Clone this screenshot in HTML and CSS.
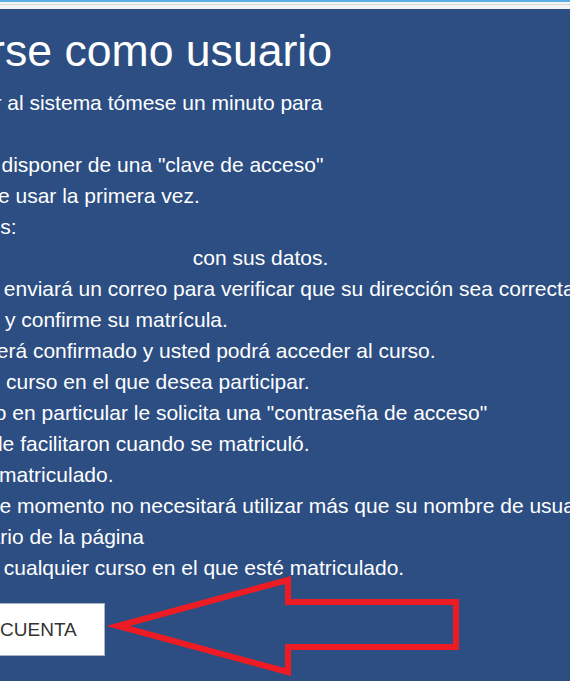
FILE: index.html
```html
<!DOCTYPE html>
<html lang="es">
<head>
<meta charset="utf-8">
<title>Registrarse como usuario</title>
<link rel="stylesheet" href="styles.css">
</head>
<body>
<div class="topbar"><div class="topbar-line"></div></div>
<main class="page">
  <div class="content">
    <h2 class="title">Registrarse como usuario</h2>
    <div class="lines">
      <div class="line">Hola, para acceder al sistema tómese un minuto para</div>
      <div class="line">crear una cuenta.</div>
      <div class="line">Cada curso puede disponer de una "clave de acceso"</div>
      <div class="line">que sólo tendrá que usar la primera vez.</div>
      <div class="line">Estos son los pasos:</div>
      <div class="line">1. Complete el <a class="link" href="#">Formulario de Matrícula</a> con sus datos.</div>
      <div class="line">2. La plataforma le enviará un correo para verificar que su dirección sea correcta.</div>
      <div class="line">3. Revise el correo y confirme su matrícula.</div>
      <div class="line">4. Así su registro será confirmado y usted podrá acceder al curso.</div>
      <div class="line">5. Elija entonces el curso en el que desea participar.</div>
      <div class="line">6.- Y, si algún curso en particular le solicita una "contraseña de acceso"</div>
      <div class="line">utilice aquella que le facilitaron cuando se matriculó.</div>
      <div class="line">7. Así, ya quedará matriculado.</div>
      <div class="line">8. Ya a partir de ese momento no necesitará utilizar más que su nombre de usuario y</div>
      <div class="line">clave en el formulario de la página</div>
      <div class="line">para así acceder a cualquier curso en el que esté matriculado.</div>
    </div>
    <div class="actions">
      <button class="btn" type="button">Crear nueva cuenta</button>
    </div>
  </div>
  <svg class="arrow" width="570" height="684" viewBox="0 0 570 684" aria-hidden="true">
    <polygon points="118,626 288,580 288,602 456,602 456,647 288,647 288,672" fill="none" stroke="#ed1c24" stroke-width="6" stroke-linejoin="miter"/>
  </svg>
</main>
<div class="footer"></div>
</body>
</html>
```
FILE: styles.css
```css
html, body {
  margin: 0;
  padding: 0;
  background: #ffffff;
  overflow: hidden;
}

body {
  width: 570px;
  height: 684px;
  font-family: "Liberation Sans", Arial, sans-serif;
}

.topbar {
  height: 9px;
  box-sizing: border-box;
  border-top: 2px solid #5aaee6;
  background: #f4f4f4;
  padding-top: 2px;
}

.topbar-line {
  height: 1px;
  background: #d6d6d6;
}

.page {
  position: relative;
  background: #2c4e82;
  height: 672px;
  overflow: hidden;
}

.content {
  margin-left: -176px;
  padding-top: 17px;
  color: #ffffff;
}

.title {
  margin: 0;
  padding-left: 0;
  font-size: 44.6px;
  font-weight: normal;
  line-height: 50px;
  white-space: nowrap;
}

.lines {
  margin-top: 11px;
  font-size: 21px;
  line-height: 31px;
}

.line {
  white-space: nowrap;
}

.link {
  color: #2c4e82;
  text-decoration: none;
}

.actions {
  margin-top: 20px;
  padding-left: 10px;
}

.btn {
  height: 53px;
  padding: 0 27px 0 25px;
  background: #ffffff;
  border: 1px solid #aab4c4;
  border-radius: 0;
  color: #333333;
  font-family: "Liberation Sans", Arial, sans-serif;
  font-size: 19px;
  text-transform: uppercase;
  white-space: nowrap;
}

.arrow {
  position: absolute;
  left: 0;
  top: -9px;
  pointer-events: none;
}

.footer {
  height: 3px;
  background: #ffffff;
}
```
